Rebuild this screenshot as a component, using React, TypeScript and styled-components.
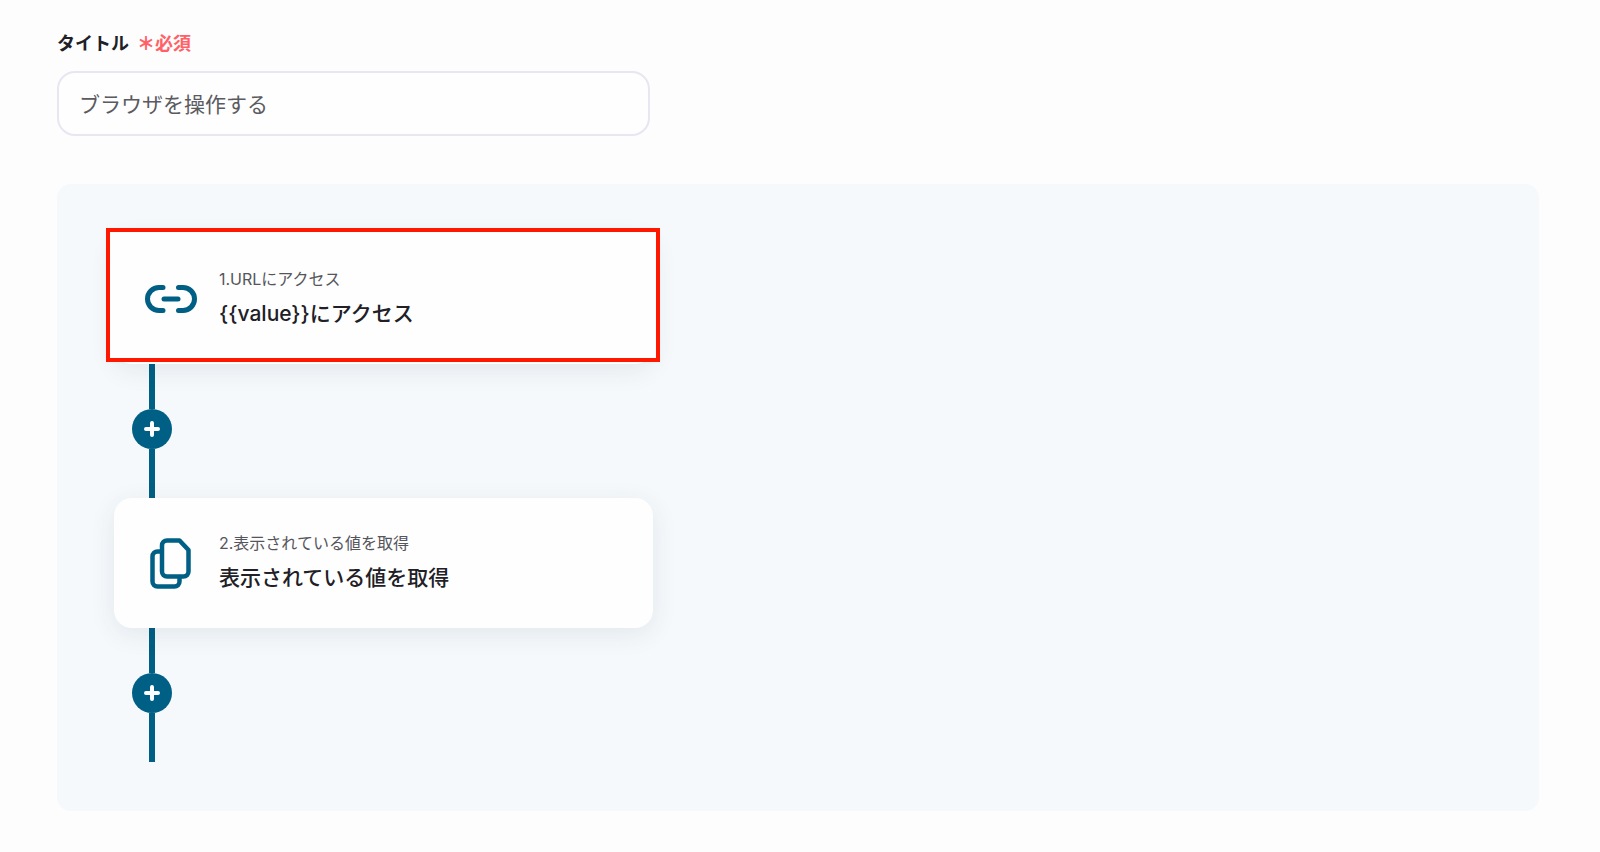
import React from "react";
import styled, { createGlobalStyle } from "styled-components";

const TEAL = "#005f84";

const GlobalStyle = createGlobalStyle`
  *, *::before, *::after { box-sizing: border-box; }
  body {
    margin: 0;
    background: #fdfdfe;
    color: #202026;
    font-family: Inter, "Noto Sans CJK JP", sans-serif;
  }
`;

const Page = styled.main`
  padding: 29px 61px 40px 57px;
`;

const Field = styled.div`
  display: flex;
  flex-direction: column;
  gap: 12px;
  max-width: 593px;
  margin-bottom: 48px;
`;

const FieldLabel = styled.label`
  display: flex;
  align-items: center;
  gap: 8px;
  font-size: 18px;
  line-height: 30px;
  font-weight: 700;
`;

const Required = styled.span`
  color: #ff6166;
`;

const Mark = styled.span`
  font-weight: 900;
`;

const TextInput = styled.input`
  width: 100%;
  height: 65px;
  padding: 0 20px 2px;
  border: 2px solid #e6e7f1;
  border-radius: 18px;
  background: #fefefe;
  color: #5a5a60;
  font: inherit;
  font-size: 21px;
`;

const FlowPanel = styled.section`
  padding: 50px 57px 49px;
  border-radius: 14px;
  background: #f5f9fc;
`;

const StepList = styled.ol`
  display: flex;
  flex-direction: column;
  max-width: 539px;
  margin: 0;
  padding: 0;
  list-style: none;
`;

const StepCard = styled.article<{ $highlighted?: boolean }>`
  position: relative;
  display: flex;
  align-items: center;
  gap: 20px;
  height: 130px;
  padding: 0 30px 0 29px;
  border-radius: 18px;
  background: #fefefe;
  box-shadow: 0 6px 26px rgba(40, 50, 70, 0.09);

  &::after {
    content: "";
    display: ${(p) => (p.$highlighted ? "block" : "none")};
    position: absolute;
    inset: -6px -7px 2px -8px;
    border: 4px solid #ff1800;
    background: #fefefe;
    z-index: 0;
  }
`;

const IconBox = styled.div`
  position: relative;
  z-index: 1;
  display: flex;
  flex: none;
  width: 56px;
  height: 56px;
`;

const StepText = styled.div`
  position: relative;
  z-index: 1;
  padding-bottom: 4px;
`;

const StepKind = styled.p`
  margin: 0;
  color: #55555b;
  font-size: 16px;
  line-height: 32px;
`;

const StepName = styled.h2`
  margin: 0;
  font-size: 21px;
  line-height: 37px;
  font-weight: 500;
`;

const Connector = styled.div`
  display: flex;
  flex-direction: column;
  align-items: center;
  width: 76px;
  height: 134px;
`;

const Line = styled.span<{ $grow?: boolean }>`
  flex: ${(p) => (p.$grow ? "1" : "none")};
  width: 6px;
  height: 45px;
  background: ${TEAL};
`;

const AddButton = styled.button`
  display: flex;
  align-items: center;
  justify-content: center;
  width: 40px;
  height: 40px;
  padding: 0;
  border: 0;
  border-radius: 50%;
  background: ${TEAL};
  cursor: pointer;
`;

function LinkIcon() {
  return (
    <svg width="56" height="56" viewBox="0 0 56 56" fill="none" stroke={TEAL} strokeWidth="5" strokeLinecap="round" aria-hidden="true">
      <path d="M20 16.500H16a11.500 11.500 0 0 0 0 23h4" />
      <path d="M35.500 16.500h4.500a11.500 11.500 0 0 1 0 23h-4.500" />
      <path d="M21 28h14" />
    </svg>
  );
}

function CopyIcon() {
  return (
    <svg width="56" height="56" viewBox="0 0 56 56" fill="none" stroke={TEAL} strokeWidth="4.500" strokeLinejoin="round" strokeLinecap="round" aria-hidden="true">
      <path d="M24 5.500h12.500l9 9.500v21.500a5 5 0 0 1-5 5H24a5 5 0 0 1-5-5v-26a5 5 0 0 1 5-5Z" />
      <path d="M18 16.500H14.500a5 5 0 0 0-5 5v25a5 5 0 0 0 5 5h17a5 5 0 0 0 5-5V42" />
    </svg>
  );
}

function PlusIcon() {
  return (
    <svg width="16" height="16" viewBox="0 0 16 16" stroke="#fff" strokeWidth="4" strokeLinecap="round" aria-hidden="true">
      <path d="M8 2v12M2 8h12" />
    </svg>
  );
}

const steps = [
  { kind: "1.URLにアクセス", name: "{{value}}にアクセス", Icon: LinkIcon, highlighted: true },
  { kind: "2.表示されている値を取得", name: "表示されている値を取得", Icon: CopyIcon, highlighted: false },
];

export default function App() {
  return (
    <Page lang="ja">
      <GlobalStyle />
      <Field>
        <FieldLabel htmlFor="title">
          タイトル
          <Required>
            <Mark>＊</Mark>必須
          </Required>
        </FieldLabel>
        <TextInput id="title" type="text" required defaultValue="ブラウザを操作する" />
      </Field>
      <FlowPanel>
        <StepList>
          {steps.map(({ kind, name, Icon, highlighted }) => (
            <li key={kind}>
              <StepCard $highlighted={highlighted}>
                <IconBox>
                  <Icon />
                </IconBox>
                <StepText>
                  <StepKind>{kind}</StepKind>
                  <StepName>{name}</StepName>
                </StepText>
              </StepCard>
              <Connector>
                <Line />
                <AddButton type="button" aria-label="ステップを追加">
                  <PlusIcon />
                </AddButton>
                <Line $grow />
              </Connector>
            </li>
          ))}
        </StepList>
      </FlowPanel>
    </Page>
  );
}
